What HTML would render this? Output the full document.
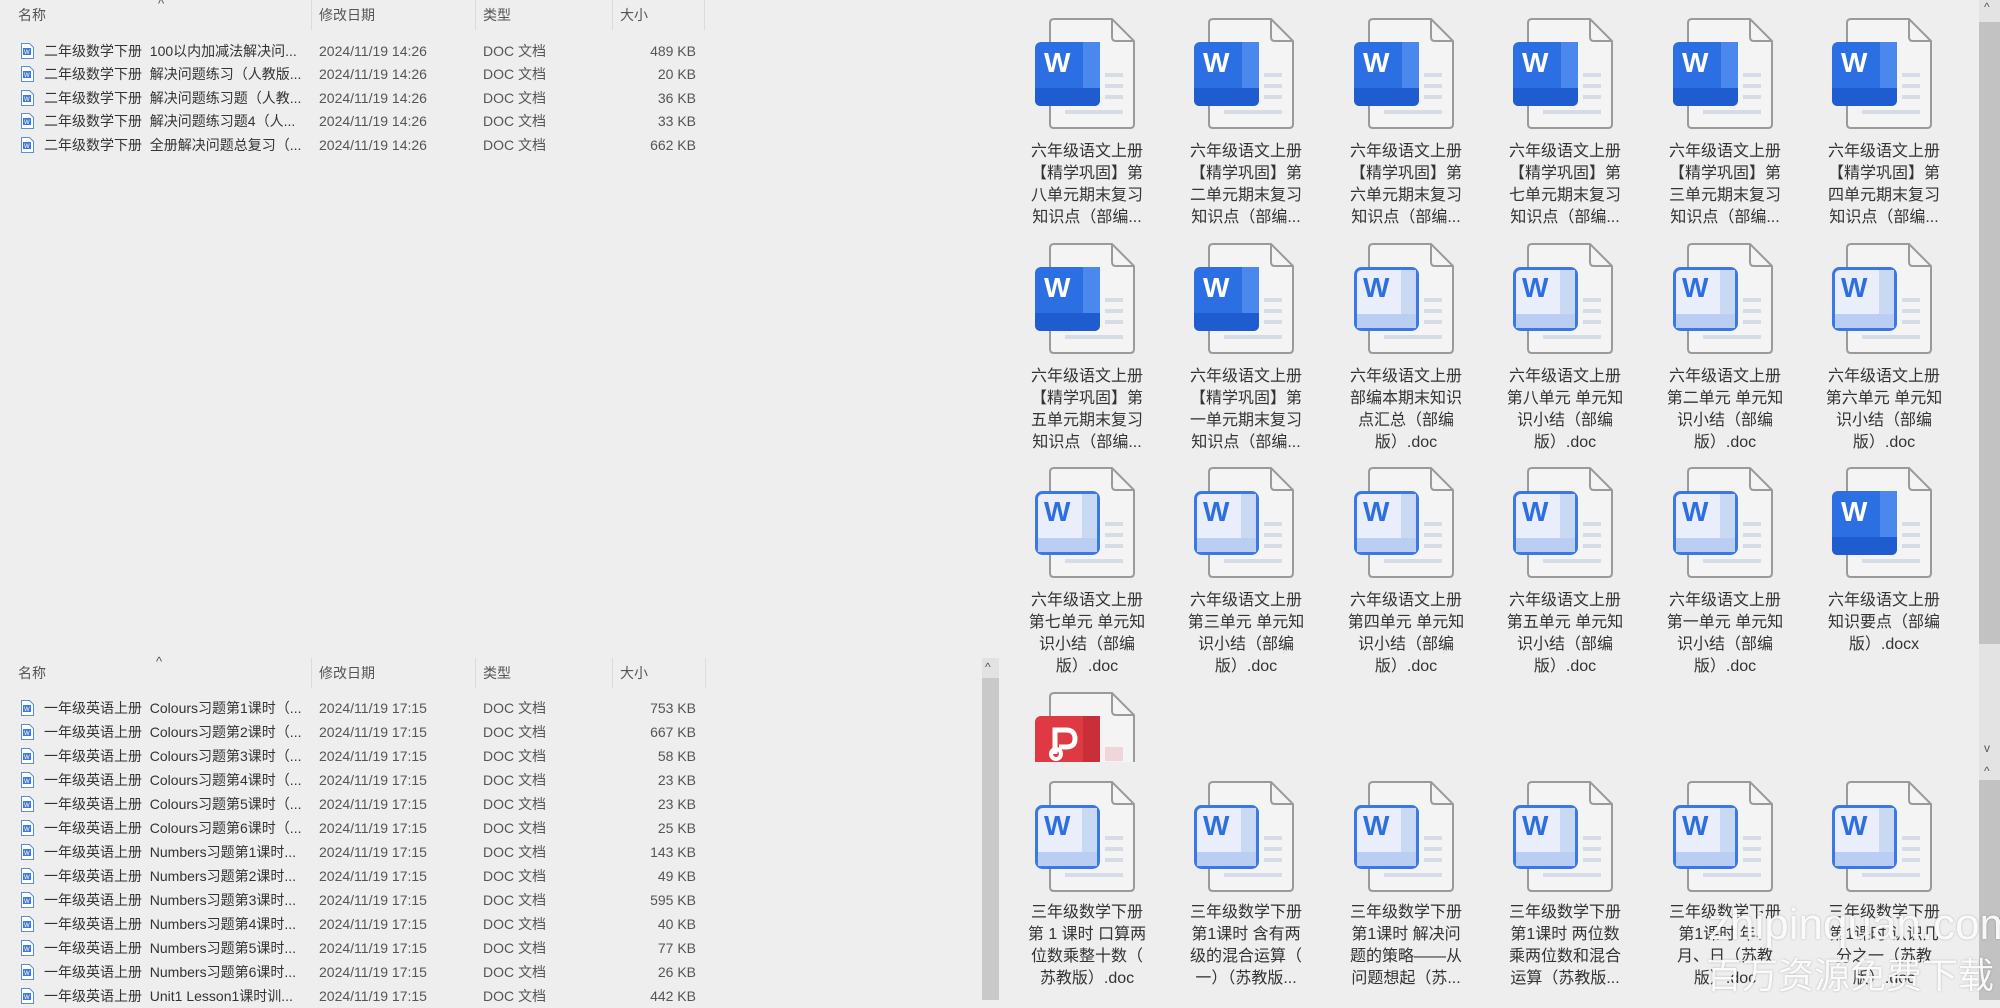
<!DOCTYPE html>
<html><head><meta charset="utf-8">
<style>
*{margin:0;padding:0;box-sizing:border-box}
body{width:2000px;height:1000px;overflow:hidden;background:#eeeeee;font-family:"Liberation Sans","Noto Sans CJK SC",sans-serif;position:relative;color:#333}
.a{position:absolute}
.hd{position:absolute;font-size:14px;color:#555;line-height:20px}
.sep{position:absolute;width:1px;height:30px;background:#dcdcdc}
.row{position:absolute;left:0;width:720px;height:24px;font-size:14px;line-height:24px;color:#333;white-space:nowrap}
.row span{position:absolute}
.row .n{left:44px;width:258px;overflow:hidden}
.row .d{left:319px;color:#555}
.row .t{left:483px;color:#555}
.row .s{right:24px;color:#555}
.row svg{position:absolute;left:20px;top:3px}
.ic{position:absolute;width:100px;height:112px}
.lb{position:absolute;width:170px;text-align:center;font-size:16px;line-height:22px;color:#333;white-space:nowrap}
</style></head><body>

<!-- top list -->
<div class="hd" style="left:18px;top:5px">名称</div>
<div class="hd" style="left:158px;top:-6px;font-size:13px">^</div>
<div class="hd" style="left:319px;top:5px">修改日期</div>
<div class="hd" style="left:483px;top:5px">类型</div>
<div class="hd" style="left:620px;top:5px">大小</div>
<div class="sep" style="left:311px;top:0"></div><div class="sep" style="left:475px;top:0"></div><div class="sep" style="left:612px;top:0"></div><div class="sep" style="left:704px;top:0"></div>

<div class="row" style="top:39px"><svg width="15" height="18" viewBox="0 0 15 18"><path d="M1.5 1.5h8l4 4v11h-12z" fill="#fff" stroke="#5a8ed6"/><rect x="3" y="6" width="8" height="7" fill="#3d78d8"/><text x="4" y="12" font-size="6" fill="#fff" font-family="Liberation Sans">W</text></svg><span class="n">二年级数学下册&nbsp; 100以内加减法解决问...</span><span class="d">2024/11/19 14:26</span><span class="t">DOC 文档</span><span class="s">489 KB</span></div>
<div class="row" style="top:62px"><svg width="15" height="18" viewBox="0 0 15 18"><path d="M1.5 1.5h8l4 4v11h-12z" fill="#fff" stroke="#5a8ed6"/><rect x="3" y="6" width="8" height="7" fill="#3d78d8"/><text x="4" y="12" font-size="6" fill="#fff" font-family="Liberation Sans">W</text></svg><span class="n">二年级数学下册&nbsp; 解决问题练习（人教版...</span><span class="d">2024/11/19 14:26</span><span class="t">DOC 文档</span><span class="s">20 KB</span></div>
<div class="row" style="top:86px"><svg width="15" height="18" viewBox="0 0 15 18"><path d="M1.5 1.5h8l4 4v11h-12z" fill="#fff" stroke="#5a8ed6"/><rect x="3" y="6" width="8" height="7" fill="#3d78d8"/><text x="4" y="12" font-size="6" fill="#fff" font-family="Liberation Sans">W</text></svg><span class="n">二年级数学下册&nbsp; 解决问题练习题（人教...</span><span class="d">2024/11/19 14:26</span><span class="t">DOC 文档</span><span class="s">36 KB</span></div>
<div class="row" style="top:109px"><svg width="15" height="18" viewBox="0 0 15 18"><path d="M1.5 1.5h8l4 4v11h-12z" fill="#fff" stroke="#5a8ed6"/><rect x="3" y="6" width="8" height="7" fill="#3d78d8"/><text x="4" y="12" font-size="6" fill="#fff" font-family="Liberation Sans">W</text></svg><span class="n">二年级数学下册&nbsp; 解决问题练习题4（人...</span><span class="d">2024/11/19 14:26</span><span class="t">DOC 文档</span><span class="s">33 KB</span></div>
<div class="row" style="top:133px"><svg width="15" height="18" viewBox="0 0 15 18"><path d="M1.5 1.5h8l4 4v11h-12z" fill="#fff" stroke="#5a8ed6"/><rect x="3" y="6" width="8" height="7" fill="#3d78d8"/><text x="4" y="12" font-size="6" fill="#fff" font-family="Liberation Sans">W</text></svg><span class="n">二年级数学下册&nbsp; 全册解决问题总复习（...</span><span class="d">2024/11/19 14:26</span><span class="t">DOC 文档</span><span class="s">662 KB</span></div>

<!-- bottom list -->
<div class="hd" style="left:18px;top:663px">名称</div>
<div class="hd" style="left:156px;top:652px;font-size:13px">^</div>
<div class="hd" style="left:319px;top:663px">修改日期</div>
<div class="hd" style="left:483px;top:663px">类型</div>
<div class="hd" style="left:620px;top:663px">大小</div>
<div class="sep" style="left:311px;top:658px"></div><div class="sep" style="left:475px;top:658px"></div><div class="sep" style="left:612px;top:658px"></div><div class="sep" style="left:705px;top:658px"></div>

<div class="row" style="top:696px"><svg width="15" height="18" viewBox="0 0 15 18"><path d="M1.5 1.5h8l4 4v11h-12z" fill="#fff" stroke="#5a8ed6"/><rect x="3" y="6" width="8" height="7" fill="#3d78d8"/><text x="4" y="12" font-size="6" fill="#fff" font-family="Liberation Sans">W</text></svg><span class="n">一年级英语上册&nbsp; Colours习题第1课时（...</span><span class="d">2024/11/19 17:15</span><span class="t">DOC 文档</span><span class="s">753 KB</span></div>
<div class="row" style="top:720px"><svg width="15" height="18" viewBox="0 0 15 18"><path d="M1.5 1.5h8l4 4v11h-12z" fill="#fff" stroke="#5a8ed6"/><rect x="3" y="6" width="8" height="7" fill="#3d78d8"/><text x="4" y="12" font-size="6" fill="#fff" font-family="Liberation Sans">W</text></svg><span class="n">一年级英语上册&nbsp; Colours习题第2课时（...</span><span class="d">2024/11/19 17:15</span><span class="t">DOC 文档</span><span class="s">667 KB</span></div>
<div class="row" style="top:744px"><svg width="15" height="18" viewBox="0 0 15 18"><path d="M1.5 1.5h8l4 4v11h-12z" fill="#fff" stroke="#5a8ed6"/><rect x="3" y="6" width="8" height="7" fill="#3d78d8"/><text x="4" y="12" font-size="6" fill="#fff" font-family="Liberation Sans">W</text></svg><span class="n">一年级英语上册&nbsp; Colours习题第3课时（...</span><span class="d">2024/11/19 17:15</span><span class="t">DOC 文档</span><span class="s">58 KB</span></div>
<div class="row" style="top:768px"><svg width="15" height="18" viewBox="0 0 15 18"><path d="M1.5 1.5h8l4 4v11h-12z" fill="#fff" stroke="#5a8ed6"/><rect x="3" y="6" width="8" height="7" fill="#3d78d8"/><text x="4" y="12" font-size="6" fill="#fff" font-family="Liberation Sans">W</text></svg><span class="n">一年级英语上册&nbsp; Colours习题第4课时（...</span><span class="d">2024/11/19 17:15</span><span class="t">DOC 文档</span><span class="s">23 KB</span></div>
<div class="row" style="top:792px"><svg width="15" height="18" viewBox="0 0 15 18"><path d="M1.5 1.5h8l4 4v11h-12z" fill="#fff" stroke="#5a8ed6"/><rect x="3" y="6" width="8" height="7" fill="#3d78d8"/><text x="4" y="12" font-size="6" fill="#fff" font-family="Liberation Sans">W</text></svg><span class="n">一年级英语上册&nbsp; Colours习题第5课时（...</span><span class="d">2024/11/19 17:15</span><span class="t">DOC 文档</span><span class="s">23 KB</span></div>
<div class="row" style="top:816px"><svg width="15" height="18" viewBox="0 0 15 18"><path d="M1.5 1.5h8l4 4v11h-12z" fill="#fff" stroke="#5a8ed6"/><rect x="3" y="6" width="8" height="7" fill="#3d78d8"/><text x="4" y="12" font-size="6" fill="#fff" font-family="Liberation Sans">W</text></svg><span class="n">一年级英语上册&nbsp; Colours习题第6课时（...</span><span class="d">2024/11/19 17:15</span><span class="t">DOC 文档</span><span class="s">25 KB</span></div>
<div class="row" style="top:840px"><svg width="15" height="18" viewBox="0 0 15 18"><path d="M1.5 1.5h8l4 4v11h-12z" fill="#fff" stroke="#5a8ed6"/><rect x="3" y="6" width="8" height="7" fill="#3d78d8"/><text x="4" y="12" font-size="6" fill="#fff" font-family="Liberation Sans">W</text></svg><span class="n">一年级英语上册&nbsp; Numbers习题第1课时...</span><span class="d">2024/11/19 17:15</span><span class="t">DOC 文档</span><span class="s">143 KB</span></div>
<div class="row" style="top:864px"><svg width="15" height="18" viewBox="0 0 15 18"><path d="M1.5 1.5h8l4 4v11h-12z" fill="#fff" stroke="#5a8ed6"/><rect x="3" y="6" width="8" height="7" fill="#3d78d8"/><text x="4" y="12" font-size="6" fill="#fff" font-family="Liberation Sans">W</text></svg><span class="n">一年级英语上册&nbsp; Numbers习题第2课时...</span><span class="d">2024/11/19 17:15</span><span class="t">DOC 文档</span><span class="s">49 KB</span></div>
<div class="row" style="top:888px"><svg width="15" height="18" viewBox="0 0 15 18"><path d="M1.5 1.5h8l4 4v11h-12z" fill="#fff" stroke="#5a8ed6"/><rect x="3" y="6" width="8" height="7" fill="#3d78d8"/><text x="4" y="12" font-size="6" fill="#fff" font-family="Liberation Sans">W</text></svg><span class="n">一年级英语上册&nbsp; Numbers习题第3课时...</span><span class="d">2024/11/19 17:15</span><span class="t">DOC 文档</span><span class="s">595 KB</span></div>
<div class="row" style="top:912px"><svg width="15" height="18" viewBox="0 0 15 18"><path d="M1.5 1.5h8l4 4v11h-12z" fill="#fff" stroke="#5a8ed6"/><rect x="3" y="6" width="8" height="7" fill="#3d78d8"/><text x="4" y="12" font-size="6" fill="#fff" font-family="Liberation Sans">W</text></svg><span class="n">一年级英语上册&nbsp; Numbers习题第4课时...</span><span class="d">2024/11/19 17:15</span><span class="t">DOC 文档</span><span class="s">40 KB</span></div>
<div class="row" style="top:936px"><svg width="15" height="18" viewBox="0 0 15 18"><path d="M1.5 1.5h8l4 4v11h-12z" fill="#fff" stroke="#5a8ed6"/><rect x="3" y="6" width="8" height="7" fill="#3d78d8"/><text x="4" y="12" font-size="6" fill="#fff" font-family="Liberation Sans">W</text></svg><span class="n">一年级英语上册&nbsp; Numbers习题第5课时...</span><span class="d">2024/11/19 17:15</span><span class="t">DOC 文档</span><span class="s">77 KB</span></div>
<div class="row" style="top:960px"><svg width="15" height="18" viewBox="0 0 15 18"><path d="M1.5 1.5h8l4 4v11h-12z" fill="#fff" stroke="#5a8ed6"/><rect x="3" y="6" width="8" height="7" fill="#3d78d8"/><text x="4" y="12" font-size="6" fill="#fff" font-family="Liberation Sans">W</text></svg><span class="n">一年级英语上册&nbsp; Numbers习题第6课时...</span><span class="d">2024/11/19 17:15</span><span class="t">DOC 文档</span><span class="s">26 KB</span></div>
<div class="row" style="top:984px"><svg width="15" height="18" viewBox="0 0 15 18"><path d="M1.5 1.5h8l4 4v11h-12z" fill="#fff" stroke="#5a8ed6"/><rect x="3" y="6" width="8" height="7" fill="#3d78d8"/><text x="4" y="12" font-size="6" fill="#fff" font-family="Liberation Sans">W</text></svg><span class="n">一年级英语上册&nbsp; Unit1 Lesson1课时训...</span><span class="d">2024/11/19 17:15</span><span class="t">DOC 文档</span><span class="s">442 KB</span></div>

<!-- middle scrollbar -->
<div class="a" style="left:982px;top:658px;width:17px;height:342px;background:#e2e2e2"></div>
<div class="a" style="left:982px;top:678px;width:17px;height:322px;background:#c9c9c9"></div>
<div class="a" style="left:985px;top:660px;font-size:12px;color:#555">^</div>

<!-- right scrollbar -->
<div class="a" style="left:1979px;top:0;width:21px;height:1000px;background:#e3e3e3"></div>
<div class="a" style="left:1979px;top:22px;width:21px;height:622px;background:#c2c2c2"></div>
<div class="a" style="left:1979px;top:780px;width:21px;height:220px;background:#c2c2c2"></div>
<div class="a" style="left:1984px;top:0;font-size:12px;color:#555">^</div>
<div class="a" style="left:1984px;top:741px;font-size:12px;color:#555">v</div>
<div class="a" style="left:1984px;top:764px;font-size:12px;color:#555">^</div>

<!-- ICONS: filled = F, light = L -->
<!-- Row 1 top 18 -->
<svg class="ic" style="left:1035px;top:18px" viewBox="0 0 100 112"><path d="M19 1H77L99 23V106Q99 110 95 110H19Q15 110 15 106V5Q15 1 19 1Z" fill="#f4f4f4" stroke="#9a9a9a" stroke-width="2"/><path d="M77 1V19Q77 23 81 23H99" fill="none" stroke="#9a9a9a" stroke-width="2"/><rect x="70" y="55" width="18" height="4" fill="#d6dce6"/><rect x="70" y="66" width="18" height="4" fill="#d6dce6"/><rect x="70" y="77" width="18" height="4" fill="#d6dce6"/><rect x="30" y="92" width="58" height="4" fill="#d6dce6"/><rect x="0" y="24" width="65" height="64" rx="6" fill="#2c6fe3"/><rect x="48" y="24" width="17" height="50" fill="#4a88ee"/><path d="M0 70H65V82Q65 88 59 88H6Q0 88 0 82Z" fill="#1e5ccf"/><text x="9" y="54" font-family="Liberation Sans" font-weight="bold" font-size="28" fill="#fff">W</text></svg>
<svg class="ic" style="left:1194px;top:18px" viewBox="0 0 100 112"><path d="M19 1H77L99 23V106Q99 110 95 110H19Q15 110 15 106V5Q15 1 19 1Z" fill="#f4f4f4" stroke="#9a9a9a" stroke-width="2"/><path d="M77 1V19Q77 23 81 23H99" fill="none" stroke="#9a9a9a" stroke-width="2"/><rect x="70" y="55" width="18" height="4" fill="#d6dce6"/><rect x="70" y="66" width="18" height="4" fill="#d6dce6"/><rect x="70" y="77" width="18" height="4" fill="#d6dce6"/><rect x="30" y="92" width="58" height="4" fill="#d6dce6"/><rect x="0" y="24" width="65" height="64" rx="6" fill="#2c6fe3"/><rect x="48" y="24" width="17" height="50" fill="#4a88ee"/><path d="M0 70H65V82Q65 88 59 88H6Q0 88 0 82Z" fill="#1e5ccf"/><text x="9" y="54" font-family="Liberation Sans" font-weight="bold" font-size="28" fill="#fff">W</text></svg>
<svg class="ic" style="left:1354px;top:18px" viewBox="0 0 100 112"><path d="M19 1H77L99 23V106Q99 110 95 110H19Q15 110 15 106V5Q15 1 19 1Z" fill="#f4f4f4" stroke="#9a9a9a" stroke-width="2"/><path d="M77 1V19Q77 23 81 23H99" fill="none" stroke="#9a9a9a" stroke-width="2"/><rect x="70" y="55" width="18" height="4" fill="#d6dce6"/><rect x="70" y="66" width="18" height="4" fill="#d6dce6"/><rect x="70" y="77" width="18" height="4" fill="#d6dce6"/><rect x="30" y="92" width="58" height="4" fill="#d6dce6"/><rect x="0" y="24" width="65" height="64" rx="6" fill="#2c6fe3"/><rect x="48" y="24" width="17" height="50" fill="#4a88ee"/><path d="M0 70H65V82Q65 88 59 88H6Q0 88 0 82Z" fill="#1e5ccf"/><text x="9" y="54" font-family="Liberation Sans" font-weight="bold" font-size="28" fill="#fff">W</text></svg>
<svg class="ic" style="left:1513px;top:18px" viewBox="0 0 100 112"><path d="M19 1H77L99 23V106Q99 110 95 110H19Q15 110 15 106V5Q15 1 19 1Z" fill="#f4f4f4" stroke="#9a9a9a" stroke-width="2"/><path d="M77 1V19Q77 23 81 23H99" fill="none" stroke="#9a9a9a" stroke-width="2"/><rect x="70" y="55" width="18" height="4" fill="#d6dce6"/><rect x="70" y="66" width="18" height="4" fill="#d6dce6"/><rect x="70" y="77" width="18" height="4" fill="#d6dce6"/><rect x="30" y="92" width="58" height="4" fill="#d6dce6"/><rect x="0" y="24" width="65" height="64" rx="6" fill="#2c6fe3"/><rect x="48" y="24" width="17" height="50" fill="#4a88ee"/><path d="M0 70H65V82Q65 88 59 88H6Q0 88 0 82Z" fill="#1e5ccf"/><text x="9" y="54" font-family="Liberation Sans" font-weight="bold" font-size="28" fill="#fff">W</text></svg>
<svg class="ic" style="left:1673px;top:18px" viewBox="0 0 100 112"><path d="M19 1H77L99 23V106Q99 110 95 110H19Q15 110 15 106V5Q15 1 19 1Z" fill="#f4f4f4" stroke="#9a9a9a" stroke-width="2"/><path d="M77 1V19Q77 23 81 23H99" fill="none" stroke="#9a9a9a" stroke-width="2"/><rect x="70" y="55" width="18" height="4" fill="#d6dce6"/><rect x="70" y="66" width="18" height="4" fill="#d6dce6"/><rect x="70" y="77" width="18" height="4" fill="#d6dce6"/><rect x="30" y="92" width="58" height="4" fill="#d6dce6"/><rect x="0" y="24" width="65" height="64" rx="6" fill="#2c6fe3"/><rect x="48" y="24" width="17" height="50" fill="#4a88ee"/><path d="M0 70H65V82Q65 88 59 88H6Q0 88 0 82Z" fill="#1e5ccf"/><text x="9" y="54" font-family="Liberation Sans" font-weight="bold" font-size="28" fill="#fff">W</text></svg>
<svg class="ic" style="left:1832px;top:18px" viewBox="0 0 100 112"><path d="M19 1H77L99 23V106Q99 110 95 110H19Q15 110 15 106V5Q15 1 19 1Z" fill="#f4f4f4" stroke="#9a9a9a" stroke-width="2"/><path d="M77 1V19Q77 23 81 23H99" fill="none" stroke="#9a9a9a" stroke-width="2"/><rect x="70" y="55" width="18" height="4" fill="#d6dce6"/><rect x="70" y="66" width="18" height="4" fill="#d6dce6"/><rect x="70" y="77" width="18" height="4" fill="#d6dce6"/><rect x="30" y="92" width="58" height="4" fill="#d6dce6"/><rect x="0" y="24" width="65" height="64" rx="6" fill="#2c6fe3"/><rect x="48" y="24" width="17" height="50" fill="#4a88ee"/><path d="M0 70H65V82Q65 88 59 88H6Q0 88 0 82Z" fill="#1e5ccf"/><text x="9" y="54" font-family="Liberation Sans" font-weight="bold" font-size="28" fill="#fff">W</text></svg>

<!-- Row 2 top 243 -->
<svg class="ic" style="left:1035px;top:243px" viewBox="0 0 100 112"><path d="M19 1H77L99 23V106Q99 110 95 110H19Q15 110 15 106V5Q15 1 19 1Z" fill="#f4f4f4" stroke="#9a9a9a" stroke-width="2"/><path d="M77 1V19Q77 23 81 23H99" fill="none" stroke="#9a9a9a" stroke-width="2"/><rect x="70" y="55" width="18" height="4" fill="#d6dce6"/><rect x="70" y="66" width="18" height="4" fill="#d6dce6"/><rect x="70" y="77" width="18" height="4" fill="#d6dce6"/><rect x="30" y="92" width="58" height="4" fill="#d6dce6"/><rect x="0" y="24" width="65" height="64" rx="6" fill="#2c6fe3"/><rect x="48" y="24" width="17" height="50" fill="#4a88ee"/><path d="M0 70H65V82Q65 88 59 88H6Q0 88 0 82Z" fill="#1e5ccf"/><text x="9" y="54" font-family="Liberation Sans" font-weight="bold" font-size="28" fill="#fff">W</text></svg>
<svg class="ic" style="left:1194px;top:243px" viewBox="0 0 100 112"><path d="M19 1H77L99 23V106Q99 110 95 110H19Q15 110 15 106V5Q15 1 19 1Z" fill="#f4f4f4" stroke="#9a9a9a" stroke-width="2"/><path d="M77 1V19Q77 23 81 23H99" fill="none" stroke="#9a9a9a" stroke-width="2"/><rect x="70" y="55" width="18" height="4" fill="#d6dce6"/><rect x="70" y="66" width="18" height="4" fill="#d6dce6"/><rect x="70" y="77" width="18" height="4" fill="#d6dce6"/><rect x="30" y="92" width="58" height="4" fill="#d6dce6"/><rect x="0" y="24" width="65" height="64" rx="6" fill="#2c6fe3"/><rect x="48" y="24" width="17" height="50" fill="#4a88ee"/><path d="M0 70H65V82Q65 88 59 88H6Q0 88 0 82Z" fill="#1e5ccf"/><text x="9" y="54" font-family="Liberation Sans" font-weight="bold" font-size="28" fill="#fff">W</text></svg>
<svg class="ic" style="left:1354px;top:243px" viewBox="0 0 100 112"><path d="M19 1H77L99 23V106Q99 110 95 110H19Q15 110 15 106V5Q15 1 19 1Z" fill="#f4f4f4" stroke="#9a9a9a" stroke-width="2"/><path d="M77 1V19Q77 23 81 23H99" fill="none" stroke="#9a9a9a" stroke-width="2"/><rect x="70" y="55" width="18" height="4" fill="#d6dce6"/><rect x="70" y="66" width="18" height="4" fill="#d6dce6"/><rect x="70" y="77" width="18" height="4" fill="#d6dce6"/><rect x="30" y="92" width="58" height="4" fill="#d6dce6"/><rect x="1.5" y="25.5" width="62" height="61" rx="6" fill="#e9eefa" stroke="#3a78e6" stroke-width="3"/><rect x="47" y="27" width="15" height="44" fill="#c9d8f3"/><rect x="3" y="71" width="59" height="14" fill="#b9cef2"/><text x="9" y="54" font-family="Liberation Sans" font-weight="bold" font-size="28" fill="#2e6fe0">W</text></svg>
<svg class="ic" style="left:1513px;top:243px" viewBox="0 0 100 112"><path d="M19 1H77L99 23V106Q99 110 95 110H19Q15 110 15 106V5Q15 1 19 1Z" fill="#f4f4f4" stroke="#9a9a9a" stroke-width="2"/><path d="M77 1V19Q77 23 81 23H99" fill="none" stroke="#9a9a9a" stroke-width="2"/><rect x="70" y="55" width="18" height="4" fill="#d6dce6"/><rect x="70" y="66" width="18" height="4" fill="#d6dce6"/><rect x="70" y="77" width="18" height="4" fill="#d6dce6"/><rect x="30" y="92" width="58" height="4" fill="#d6dce6"/><rect x="1.5" y="25.5" width="62" height="61" rx="6" fill="#e9eefa" stroke="#3a78e6" stroke-width="3"/><rect x="47" y="27" width="15" height="44" fill="#c9d8f3"/><rect x="3" y="71" width="59" height="14" fill="#b9cef2"/><text x="9" y="54" font-family="Liberation Sans" font-weight="bold" font-size="28" fill="#2e6fe0">W</text></svg>
<svg class="ic" style="left:1673px;top:243px" viewBox="0 0 100 112"><path d="M19 1H77L99 23V106Q99 110 95 110H19Q15 110 15 106V5Q15 1 19 1Z" fill="#f4f4f4" stroke="#9a9a9a" stroke-width="2"/><path d="M77 1V19Q77 23 81 23H99" fill="none" stroke="#9a9a9a" stroke-width="2"/><rect x="70" y="55" width="18" height="4" fill="#d6dce6"/><rect x="70" y="66" width="18" height="4" fill="#d6dce6"/><rect x="70" y="77" width="18" height="4" fill="#d6dce6"/><rect x="30" y="92" width="58" height="4" fill="#d6dce6"/><rect x="1.5" y="25.5" width="62" height="61" rx="6" fill="#e9eefa" stroke="#3a78e6" stroke-width="3"/><rect x="47" y="27" width="15" height="44" fill="#c9d8f3"/><rect x="3" y="71" width="59" height="14" fill="#b9cef2"/><text x="9" y="54" font-family="Liberation Sans" font-weight="bold" font-size="28" fill="#2e6fe0">W</text></svg>
<svg class="ic" style="left:1832px;top:243px" viewBox="0 0 100 112"><path d="M19 1H77L99 23V106Q99 110 95 110H19Q15 110 15 106V5Q15 1 19 1Z" fill="#f4f4f4" stroke="#9a9a9a" stroke-width="2"/><path d="M77 1V19Q77 23 81 23H99" fill="none" stroke="#9a9a9a" stroke-width="2"/><rect x="70" y="55" width="18" height="4" fill="#d6dce6"/><rect x="70" y="66" width="18" height="4" fill="#d6dce6"/><rect x="70" y="77" width="18" height="4" fill="#d6dce6"/><rect x="30" y="92" width="58" height="4" fill="#d6dce6"/><rect x="1.5" y="25.5" width="62" height="61" rx="6" fill="#e9eefa" stroke="#3a78e6" stroke-width="3"/><rect x="47" y="27" width="15" height="44" fill="#c9d8f3"/><rect x="3" y="71" width="59" height="14" fill="#b9cef2"/><text x="9" y="54" font-family="Liberation Sans" font-weight="bold" font-size="28" fill="#2e6fe0">W</text></svg>

<!-- Row 3 top 467 -->
<svg class="ic" style="left:1035px;top:467px" viewBox="0 0 100 112"><path d="M19 1H77L99 23V106Q99 110 95 110H19Q15 110 15 106V5Q15 1 19 1Z" fill="#f4f4f4" stroke="#9a9a9a" stroke-width="2"/><path d="M77 1V19Q77 23 81 23H99" fill="none" stroke="#9a9a9a" stroke-width="2"/><rect x="70" y="55" width="18" height="4" fill="#d6dce6"/><rect x="70" y="66" width="18" height="4" fill="#d6dce6"/><rect x="70" y="77" width="18" height="4" fill="#d6dce6"/><rect x="30" y="92" width="58" height="4" fill="#d6dce6"/><rect x="1.5" y="25.5" width="62" height="61" rx="6" fill="#e9eefa" stroke="#3a78e6" stroke-width="3"/><rect x="47" y="27" width="15" height="44" fill="#c9d8f3"/><rect x="3" y="71" width="59" height="14" fill="#b9cef2"/><text x="9" y="54" font-family="Liberation Sans" font-weight="bold" font-size="28" fill="#2e6fe0">W</text></svg>
<svg class="ic" style="left:1194px;top:467px" viewBox="0 0 100 112"><path d="M19 1H77L99 23V106Q99 110 95 110H19Q15 110 15 106V5Q15 1 19 1Z" fill="#f4f4f4" stroke="#9a9a9a" stroke-width="2"/><path d="M77 1V19Q77 23 81 23H99" fill="none" stroke="#9a9a9a" stroke-width="2"/><rect x="70" y="55" width="18" height="4" fill="#d6dce6"/><rect x="70" y="66" width="18" height="4" fill="#d6dce6"/><rect x="70" y="77" width="18" height="4" fill="#d6dce6"/><rect x="30" y="92" width="58" height="4" fill="#d6dce6"/><rect x="1.5" y="25.5" width="62" height="61" rx="6" fill="#e9eefa" stroke="#3a78e6" stroke-width="3"/><rect x="47" y="27" width="15" height="44" fill="#c9d8f3"/><rect x="3" y="71" width="59" height="14" fill="#b9cef2"/><text x="9" y="54" font-family="Liberation Sans" font-weight="bold" font-size="28" fill="#2e6fe0">W</text></svg>
<svg class="ic" style="left:1354px;top:467px" viewBox="0 0 100 112"><path d="M19 1H77L99 23V106Q99 110 95 110H19Q15 110 15 106V5Q15 1 19 1Z" fill="#f4f4f4" stroke="#9a9a9a" stroke-width="2"/><path d="M77 1V19Q77 23 81 23H99" fill="none" stroke="#9a9a9a" stroke-width="2"/><rect x="70" y="55" width="18" height="4" fill="#d6dce6"/><rect x="70" y="66" width="18" height="4" fill="#d6dce6"/><rect x="70" y="77" width="18" height="4" fill="#d6dce6"/><rect x="30" y="92" width="58" height="4" fill="#d6dce6"/><rect x="1.5" y="25.5" width="62" height="61" rx="6" fill="#e9eefa" stroke="#3a78e6" stroke-width="3"/><rect x="47" y="27" width="15" height="44" fill="#c9d8f3"/><rect x="3" y="71" width="59" height="14" fill="#b9cef2"/><text x="9" y="54" font-family="Liberation Sans" font-weight="bold" font-size="28" fill="#2e6fe0">W</text></svg>
<svg class="ic" style="left:1513px;top:467px" viewBox="0 0 100 112"><path d="M19 1H77L99 23V106Q99 110 95 110H19Q15 110 15 106V5Q15 1 19 1Z" fill="#f4f4f4" stroke="#9a9a9a" stroke-width="2"/><path d="M77 1V19Q77 23 81 23H99" fill="none" stroke="#9a9a9a" stroke-width="2"/><rect x="70" y="55" width="18" height="4" fill="#d6dce6"/><rect x="70" y="66" width="18" height="4" fill="#d6dce6"/><rect x="70" y="77" width="18" height="4" fill="#d6dce6"/><rect x="30" y="92" width="58" height="4" fill="#d6dce6"/><rect x="1.5" y="25.5" width="62" height="61" rx="6" fill="#e9eefa" stroke="#3a78e6" stroke-width="3"/><rect x="47" y="27" width="15" height="44" fill="#c9d8f3"/><rect x="3" y="71" width="59" height="14" fill="#b9cef2"/><text x="9" y="54" font-family="Liberation Sans" font-weight="bold" font-size="28" fill="#2e6fe0">W</text></svg>
<svg class="ic" style="left:1673px;top:467px" viewBox="0 0 100 112"><path d="M19 1H77L99 23V106Q99 110 95 110H19Q15 110 15 106V5Q15 1 19 1Z" fill="#f4f4f4" stroke="#9a9a9a" stroke-width="2"/><path d="M77 1V19Q77 23 81 23H99" fill="none" stroke="#9a9a9a" stroke-width="2"/><rect x="70" y="55" width="18" height="4" fill="#d6dce6"/><rect x="70" y="66" width="18" height="4" fill="#d6dce6"/><rect x="70" y="77" width="18" height="4" fill="#d6dce6"/><rect x="30" y="92" width="58" height="4" fill="#d6dce6"/><rect x="1.5" y="25.5" width="62" height="61" rx="6" fill="#e9eefa" stroke="#3a78e6" stroke-width="3"/><rect x="47" y="27" width="15" height="44" fill="#c9d8f3"/><rect x="3" y="71" width="59" height="14" fill="#b9cef2"/><text x="9" y="54" font-family="Liberation Sans" font-weight="bold" font-size="28" fill="#2e6fe0">W</text></svg>
<svg class="ic" style="left:1832px;top:467px" viewBox="0 0 100 112"><path d="M19 1H77L99 23V106Q99 110 95 110H19Q15 110 15 106V5Q15 1 19 1Z" fill="#f4f4f4" stroke="#9a9a9a" stroke-width="2"/><path d="M77 1V19Q77 23 81 23H99" fill="none" stroke="#9a9a9a" stroke-width="2"/><rect x="70" y="55" width="18" height="4" fill="#d6dce6"/><rect x="70" y="66" width="18" height="4" fill="#d6dce6"/><rect x="70" y="77" width="18" height="4" fill="#d6dce6"/><rect x="30" y="92" width="58" height="4" fill="#d6dce6"/><rect x="0" y="24" width="65" height="64" rx="6" fill="#2c6fe3"/><rect x="48" y="24" width="17" height="50" fill="#4a88ee"/><path d="M0 70H65V82Q65 88 59 88H6Q0 88 0 82Z" fill="#1e5ccf"/><text x="9" y="54" font-family="Liberation Sans" font-weight="bold" font-size="28" fill="#fff">W</text></svg>

<!-- Row 4 pdf clipped -->
<div class="a" style="left:1035px;top:692px;width:100px;height:70px;overflow:hidden">
<svg width="100" height="112" viewBox="0 0 100 112"><path d="M19 1H77L99 23V106Q99 110 95 110H19Q15 110 15 106V5Q15 1 19 1Z" fill="#f4f4f4" stroke="#9a9a9a" stroke-width="2"/><path d="M77 1V19Q77 23 81 23H99" fill="none" stroke="#9a9a9a" stroke-width="2"/><rect x="70" y="55" width="18" height="14" fill="#f0d6da"/><rect x="0" y="24" width="65" height="64" rx="6" fill="#df3a44"/><rect x="48" y="24" width="17" height="64" fill="#c92f39"/><path d="M20 62V38H31Q40 38 40 47Q40 55 31 55H24" fill="none" stroke="#fff" stroke-width="5"/><circle cx="21" cy="62" r="5" fill="none" stroke="#fff" stroke-width="4"/></svg></div>

<!-- Row 5 top 781 -->
<svg class="ic" style="left:1035px;top:781px" viewBox="0 0 100 112"><path d="M19 1H77L99 23V106Q99 110 95 110H19Q15 110 15 106V5Q15 1 19 1Z" fill="#f4f4f4" stroke="#9a9a9a" stroke-width="2"/><path d="M77 1V19Q77 23 81 23H99" fill="none" stroke="#9a9a9a" stroke-width="2"/><rect x="70" y="55" width="18" height="4" fill="#d6dce6"/><rect x="70" y="66" width="18" height="4" fill="#d6dce6"/><rect x="70" y="77" width="18" height="4" fill="#d6dce6"/><rect x="30" y="92" width="58" height="4" fill="#d6dce6"/><rect x="1.5" y="25.5" width="62" height="61" rx="6" fill="#e9eefa" stroke="#3a78e6" stroke-width="3"/><rect x="47" y="27" width="15" height="44" fill="#c9d8f3"/><rect x="3" y="71" width="59" height="14" fill="#b9cef2"/><text x="9" y="54" font-family="Liberation Sans" font-weight="bold" font-size="28" fill="#2e6fe0">W</text></svg>
<svg class="ic" style="left:1194px;top:781px" viewBox="0 0 100 112"><path d="M19 1H77L99 23V106Q99 110 95 110H19Q15 110 15 106V5Q15 1 19 1Z" fill="#f4f4f4" stroke="#9a9a9a" stroke-width="2"/><path d="M77 1V19Q77 23 81 23H99" fill="none" stroke="#9a9a9a" stroke-width="2"/><rect x="70" y="55" width="18" height="4" fill="#d6dce6"/><rect x="70" y="66" width="18" height="4" fill="#d6dce6"/><rect x="70" y="77" width="18" height="4" fill="#d6dce6"/><rect x="30" y="92" width="58" height="4" fill="#d6dce6"/><rect x="1.5" y="25.5" width="62" height="61" rx="6" fill="#e9eefa" stroke="#3a78e6" stroke-width="3"/><rect x="47" y="27" width="15" height="44" fill="#c9d8f3"/><rect x="3" y="71" width="59" height="14" fill="#b9cef2"/><text x="9" y="54" font-family="Liberation Sans" font-weight="bold" font-size="28" fill="#2e6fe0">W</text></svg>
<svg class="ic" style="left:1354px;top:781px" viewBox="0 0 100 112"><path d="M19 1H77L99 23V106Q99 110 95 110H19Q15 110 15 106V5Q15 1 19 1Z" fill="#f4f4f4" stroke="#9a9a9a" stroke-width="2"/><path d="M77 1V19Q77 23 81 23H99" fill="none" stroke="#9a9a9a" stroke-width="2"/><rect x="70" y="55" width="18" height="4" fill="#d6dce6"/><rect x="70" y="66" width="18" height="4" fill="#d6dce6"/><rect x="70" y="77" width="18" height="4" fill="#d6dce6"/><rect x="30" y="92" width="58" height="4" fill="#d6dce6"/><rect x="1.5" y="25.5" width="62" height="61" rx="6" fill="#e9eefa" stroke="#3a78e6" stroke-width="3"/><rect x="47" y="27" width="15" height="44" fill="#c9d8f3"/><rect x="3" y="71" width="59" height="14" fill="#b9cef2"/><text x="9" y="54" font-family="Liberation Sans" font-weight="bold" font-size="28" fill="#2e6fe0">W</text></svg>
<svg class="ic" style="left:1513px;top:781px" viewBox="0 0 100 112"><path d="M19 1H77L99 23V106Q99 110 95 110H19Q15 110 15 106V5Q15 1 19 1Z" fill="#f4f4f4" stroke="#9a9a9a" stroke-width="2"/><path d="M77 1V19Q77 23 81 23H99" fill="none" stroke="#9a9a9a" stroke-width="2"/><rect x="70" y="55" width="18" height="4" fill="#d6dce6"/><rect x="70" y="66" width="18" height="4" fill="#d6dce6"/><rect x="70" y="77" width="18" height="4" fill="#d6dce6"/><rect x="30" y="92" width="58" height="4" fill="#d6dce6"/><rect x="1.5" y="25.5" width="62" height="61" rx="6" fill="#e9eefa" stroke="#3a78e6" stroke-width="3"/><rect x="47" y="27" width="15" height="44" fill="#c9d8f3"/><rect x="3" y="71" width="59" height="14" fill="#b9cef2"/><text x="9" y="54" font-family="Liberation Sans" font-weight="bold" font-size="28" fill="#2e6fe0">W</text></svg>
<svg class="ic" style="left:1673px;top:781px" viewBox="0 0 100 112"><path d="M19 1H77L99 23V106Q99 110 95 110H19Q15 110 15 106V5Q15 1 19 1Z" fill="#f4f4f4" stroke="#9a9a9a" stroke-width="2"/><path d="M77 1V19Q77 23 81 23H99" fill="none" stroke="#9a9a9a" stroke-width="2"/><rect x="70" y="55" width="18" height="4" fill="#d6dce6"/><rect x="70" y="66" width="18" height="4" fill="#d6dce6"/><rect x="70" y="77" width="18" height="4" fill="#d6dce6"/><rect x="30" y="92" width="58" height="4" fill="#d6dce6"/><rect x="1.5" y="25.5" width="62" height="61" rx="6" fill="#e9eefa" stroke="#3a78e6" stroke-width="3"/><rect x="47" y="27" width="15" height="44" fill="#c9d8f3"/><rect x="3" y="71" width="59" height="14" fill="#b9cef2"/><text x="9" y="54" font-family="Liberation Sans" font-weight="bold" font-size="28" fill="#2e6fe0">W</text></svg>
<svg class="ic" style="left:1832px;top:781px" viewBox="0 0 100 112"><path d="M19 1H77L99 23V106Q99 110 95 110H19Q15 110 15 106V5Q15 1 19 1Z" fill="#f4f4f4" stroke="#9a9a9a" stroke-width="2"/><path d="M77 1V19Q77 23 81 23H99" fill="none" stroke="#9a9a9a" stroke-width="2"/><rect x="70" y="55" width="18" height="4" fill="#d6dce6"/><rect x="70" y="66" width="18" height="4" fill="#d6dce6"/><rect x="70" y="77" width="18" height="4" fill="#d6dce6"/><rect x="30" y="92" width="58" height="4" fill="#d6dce6"/><rect x="1.5" y="25.5" width="62" height="61" rx="6" fill="#e9eefa" stroke="#3a78e6" stroke-width="3"/><rect x="47" y="27" width="15" height="44" fill="#c9d8f3"/><rect x="3" y="71" width="59" height="14" fill="#b9cef2"/><text x="9" y="54" font-family="Liberation Sans" font-weight="bold" font-size="28" fill="#2e6fe0">W</text></svg>

<!-- Labels -->
<div class="lb" style="left:1002px;top:141px">六年级语文上册<br>【精学巩固】第<br>八单元期末复习<br>知识点（部编...</div>
<div class="lb" style="left:1161px;top:141px">六年级语文上册<br>【精学巩固】第<br>二单元期末复习<br>知识点（部编...</div>
<div class="lb" style="left:1321px;top:141px">六年级语文上册<br>【精学巩固】第<br>六单元期末复习<br>知识点（部编...</div>
<div class="lb" style="left:1480px;top:141px">六年级语文上册<br>【精学巩固】第<br>七单元期末复习<br>知识点（部编...</div>
<div class="lb" style="left:1640px;top:141px">六年级语文上册<br>【精学巩固】第<br>三单元期末复习<br>知识点（部编...</div>
<div class="lb" style="left:1799px;top:141px">六年级语文上册<br>【精学巩固】第<br>四单元期末复习<br>知识点（部编...</div>

<div class="lb" style="left:1002px;top:366px">六年级语文上册<br>【精学巩固】第<br>五单元期末复习<br>知识点（部编...</div>
<div class="lb" style="left:1161px;top:366px">六年级语文上册<br>【精学巩固】第<br>一单元期末复习<br>知识点（部编...</div>
<div class="lb" style="left:1321px;top:366px">六年级语文上册<br>部编本期末知识<br>点汇总（部编<br>版）.doc</div>
<div class="lb" style="left:1480px;top:366px">六年级语文上册<br>第八单元 单元知<br>识小结（部编<br>版）.doc</div>
<div class="lb" style="left:1640px;top:366px">六年级语文上册<br>第二单元 单元知<br>识小结（部编<br>版）.doc</div>
<div class="lb" style="left:1799px;top:366px">六年级语文上册<br>第六单元 单元知<br>识小结（部编<br>版）.doc</div>

<div class="lb" style="left:1002px;top:590px">六年级语文上册<br>第七单元 单元知<br>识小结（部编<br>版）.doc</div>
<div class="lb" style="left:1161px;top:590px">六年级语文上册<br>第三单元 单元知<br>识小结（部编<br>版）.doc</div>
<div class="lb" style="left:1321px;top:590px">六年级语文上册<br>第四单元 单元知<br>识小结（部编<br>版）.doc</div>
<div class="lb" style="left:1480px;top:590px">六年级语文上册<br>第五单元 单元知<br>识小结（部编<br>版）.doc</div>
<div class="lb" style="left:1640px;top:590px">六年级语文上册<br>第一单元 单元知<br>识小结（部编<br>版）.doc</div>
<div class="lb" style="left:1799px;top:590px">六年级语文上册<br>知识要点（部编<br>版）.docx</div>

<div class="lb" style="left:1002px;top:902px">三年级数学下册<br>第 1 课时 口算两<br>位数乘整十数（<br>苏教版）.doc</div>
<div class="lb" style="left:1161px;top:902px">三年级数学下册<br>第1课时 含有两<br>级的混合运算（<br>一）（苏教版...</div>
<div class="lb" style="left:1321px;top:902px">三年级数学下册<br>第1课时 解决问<br>题的策略——从<br>问题想起（苏...</div>
<div class="lb" style="left:1480px;top:902px">三年级数学下册<br>第1课时 两位数<br>乘两位数和混合<br>运算（苏教版...</div>
<div class="lb" style="left:1640px;top:902px">三年级数学下册<br>第1课时 年、<br>月、日（苏教<br>版）.doc</div>
<div class="lb" style="left:1799px;top:902px">三年级数学下册<br>第1课时 认识几<br>分之一（苏教<br>版）.doc</div>

<!-- watermark -->
<div class="a" style="left:1708px;top:900px;font-size:44px;line-height:50px;color:rgba(255,255,255,0.92);text-shadow:0 0 2px rgba(0,0,0,0.25);white-space:nowrap">zhipinquan.com</div>
<div class="a" style="left:1706px;top:953px;font-size:36px;line-height:40px;color:rgba(255,255,255,0.92);text-shadow:0 0 2px rgba(0,0,0,0.25);white-space:nowrap;font-family:'Noto Sans CJK SC',sans-serif">百万资源免费下载</div>
</body></html>
